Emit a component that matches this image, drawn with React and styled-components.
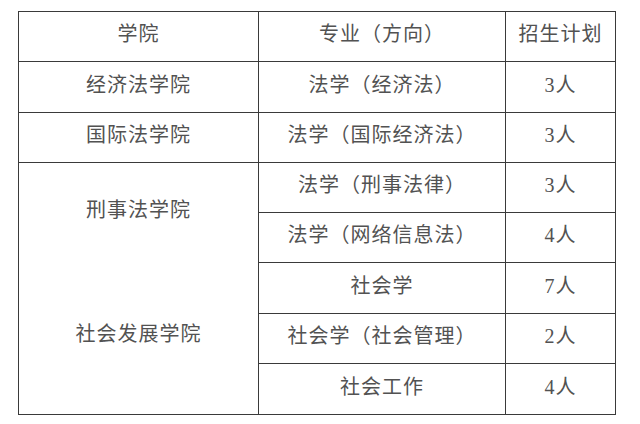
import React from "react";
import styled, { createGlobalStyle } from "styled-components";

const Global = createGlobalStyle`
  html, body { margin: 0; padding: 0; background: #fff; }
  body { width: 640px; height: 424px; overflow: hidden; }
`;

const Page = styled.div`
  padding: 11px 0 0 18px;
`;

const Table = styled.div`
  display: grid;
  grid-template-columns: 239px 246px 109px;
  grid-template-rows: 49px 50px 49px 49px 49px 50px 49px 50px;
  gap: 1px;
  padding: 1px;
  width: max-content;
  background: #3a3a3a;
  font-family: "Liberation Serif", "Noto Sans CJK SC", serif;
  font-size: 20px;
  color: #525252;
  letter-spacing: 1px;
`;

const Cell = styled.div`
  background: #fff;
  display: flex;
  align-items: center;
  justify-content: center;
  padding-bottom: 8px;
  box-sizing: border-box;
  grid-row: ${(p) => p.$row || "auto"};
  grid-column: ${(p) => p.$col || "auto"};
`;

const Merged = styled.div`
  background: #fff;
  grid-row: 4 / 9;
  grid-column: 1;
  display: flex;
  flex-direction: column;
`;

const Label = styled.div`
  height: ${(p) => p.$h}px;
  display: flex;
  align-items: center;
  justify-content: center;
  padding-bottom: ${(p) => p.$pb}px;
  box-sizing: border-box;
`;

const rows = [
  ["法学（刑事法律）", "3人"],
  ["法学（网络信息法）", "4人"],
  ["社会学", "7人"],
  ["社会学（社会管理）", "2人"],
  ["社会工作", "4人"],
];

export default function App() {
  return (
    <>
      <Global />
      <Page>
        <Table>
          <Cell>学院</Cell>
          <Cell>专业（方向）</Cell>
          <Cell>招生计划</Cell>

          <Cell>经济法学院</Cell>
          <Cell>法学（经济法）</Cell>
          <Cell>3人</Cell>

          <Cell>国际法学院</Cell>
          <Cell>法学（国际经济法）</Cell>
          <Cell>3人</Cell>

          <Merged>
            <Label $h={99} $pb={8}>刑事法学院</Label>
            <Label $h={152} $pb={12}>社会发展学院</Label>
          </Merged>

          {rows.map(([major, plan], i) => (
            <React.Fragment key={i}>
              <Cell $row={i + 4} $col={2}>{major}</Cell>
              <Cell $row={i + 4} $col={3}>{plan}</Cell>
            </React.Fragment>
          ))}
        </Table>
      </Page>
    </>
  );
}
